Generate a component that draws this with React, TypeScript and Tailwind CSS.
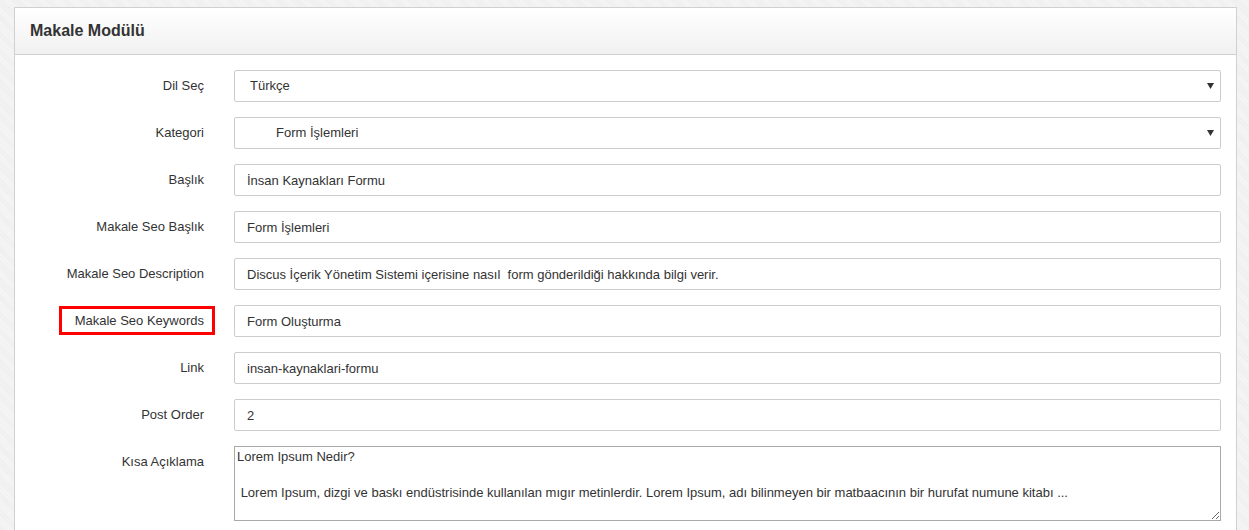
import React from "react";

const inputs = [
  { label: "Başlık", value: "İnsan Kaynakları Formu" },
  { label: "Makale Seo Başlık", value: "Form İşlemleri" },
  { label: "Makale Seo Description", value: "Discus İçerik Yönetim Sistemi içerisine nasıl  form gönderildiği hakkında bilgi verir." },
  { label: "Makale Seo Keywords", value: "Form Oluşturma", marked: true },
  { label: "Link", value: "insan-kaynaklari-formu" },
  { label: "Post Order", value: "2" },
];

function Row({ label, marked, children }: { label: string; marked?: boolean; children: React.ReactNode }) {
  return (
    <div className="flex items-start">
      <div className="w-[174px] shrink-0 pt-[8px] text-right leading-[16px] text-[13px] text-[#333]">
        <span className="relative inline-block">
          {label}
          {marked && <span className="absolute -left-[16px] -right-[11px] -top-[7px] -bottom-[6px] border-[3px] border-[#ff0000]" />}
        </span>
      </div>
      <div className="ml-[30px] flex-1">{children}</div>
    </div>
  );
}

function Select({ value, indent }: { value: string; indent?: boolean }) {
  return (
    <div className="relative">
      <select
        defaultValue={value}
        className={`block h-[32px] w-full appearance-none rounded-[2px] border border-[#cccccc] bg-white text-[13px] text-[#333] outline-none ${indent ? "pl-[41px]" : "pl-[15px]"}`}
      >
        <option>{value}</option>
      </select>
      <svg className="pointer-events-none absolute right-[7px] top-[13px]" width="7" height="6" viewBox="0 0 7 6">
        <path d="M0 0h7L3.5 6z" fill="#333" />
      </svg>
    </div>
  );
}

export default function App() {
  return (
    <div
      className="min-h-[530px] pl-[14px] pr-[12px] pt-[7px] bg-[repeating-linear-gradient(45deg,#f6f6f6_0px,#f6f6f6_1px,#eeeeee_1px,#eeeeee_2px)]"
      style={{ fontFamily: '"Liberation Sans", Arial, sans-serif' }}
    >
      <div className="border border-b-0 border-[#d0d0d0] bg-white">
        <div className="flex h-[47px] items-center border-b border-[#cfcfcf] bg-gradient-to-b from-white to-[#f1f1f1] px-[15px]">
          <h1 className="text-[16px] font-bold text-[#333]">Makale Modülü</h1>
        </div>
        <div className="flex flex-col gap-[15px] px-[15px] pt-[15px] pb-[20px]">
          <Row label="Dil Seç">
            <Select value="Türkçe" />
          </Row>
          <Row label="Kategori">
            <Select value="Form İşlemleri" indent />
          </Row>
          {inputs.map((f) => (
            <Row key={f.label} label={f.label} marked={f.marked}>
              <input
                defaultValue={f.value}
                className="block h-[32px] w-full rounded-[2px] border border-[#cccccc] bg-white px-[12px] text-[13px] text-[#333] outline-none"
              />
            </Row>
          ))}
          <Row label="Kısa Açıklama">
            <textarea
              defaultValue={"Lorem Ipsum Nedir?\n\n Lorem Ipsum, dizgi ve baskı endüstrisinde kullanılan mıgır metinlerdir. Lorem Ipsum, adı bilinmeyen bir matbaacının bir hurufat numune kitabı ..."}
              className="block h-[75px] w-full border border-[#a9a9a9] bg-white px-[2px] py-[1px] text-[13px] leading-[18px] text-[#333] outline-none"
            />
          </Row>
        </div>
      </div>
    </div>
  );
}
